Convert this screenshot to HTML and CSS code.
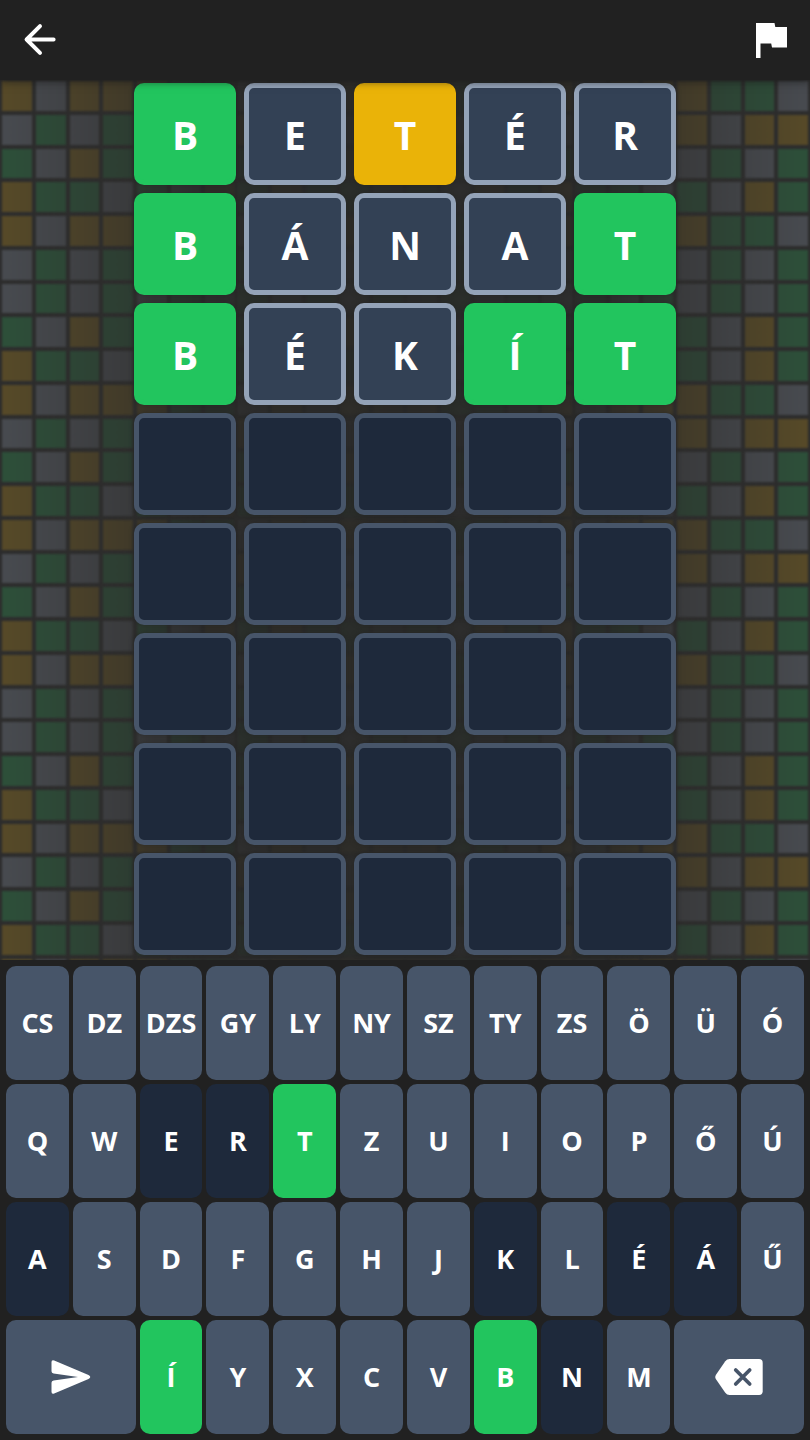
FILE: index.html
```html
<!DOCTYPE html>
<html lang="hu">
<head>
<meta charset="utf-8">
<meta name="viewport" content="width=device-width, initial-scale=1">
<title>Szójáték</title>
<link rel="stylesheet" href="styles.css">
</head>
<body>
<div class="app">
  <header class="topbar">
    <button class="icon-button" type="button" aria-label="Vissza">
      <svg width="36" height="36" viewBox="0 0 36 36" fill="none" stroke="#fff" stroke-width="4" stroke-linecap="round" stroke-linejoin="round"><path d="M31.600 17.5H4.600M18 4.200 4.600 17.5 18 30.800"/></svg>
    </button>
    <button class="icon-button" type="button" aria-label="Feladás">
      <svg width="36" height="36" viewBox="0 0 36 36" fill="#fff"><path d="M4 1h18.500l.8 4H35v20.500H20l-.8-4H8.500v14.500H4z"/></svg>
    </button>
  </header>

  <main class="play">
    <div class="mosaic" id="mosaic" aria-hidden="true"></div>
    <div class="board" id="board"></div>
  </main>

  <section class="keyboard" id="keyboard" aria-label="Billentyűzet">
    <button class="key wide send" type="button" aria-label="Küldés">
      <svg width="40" height="36" viewBox="0 0 40 36" fill="#fff"><path d="M.5 3.100Q.5.500 3.200 1.500L37.500 16.100Q41 18 37.500 19.900L3.200 34.400Q.5 35.400.5 32.800V23.700Q.5 21.700 2.600 21.400L27 18 2.600 14.500Q.5 14.200.5 12.200Z"/></svg>
    </button>
    <button class="key wide erase" type="button" aria-label="Törlés">
      <svg width="48" height="36" viewBox="0 0 48 36"><path fill="#fff" d="M14.500 0H44Q47.700 0 47.700 3.700V32.300Q47.700 36 44 36H14.500Q12 36 10.300 33.800L1 20.300Q-.5 18 1 15.700L10.300 2.200Q12 0 14.500 0Z"/><path d="M20.700 11l14 14M34.700 11l-14 14" fill="none" stroke="#475569" stroke-width="3.700" stroke-linecap="round"/></svg>
    </button>
  </section>
</div>
<script src="app.js"></script>
</body>
</html>
```
FILE: styles.css
```css
* {
  box-sizing: border-box;
}

body {
  margin: 0;
  background: #212121;
  color: #fff;
  font-family: "Open Sans", "Noto Sans", sans-serif;
}

.app {
  display: flex;
  flex-direction: column;
  min-height: 100vh;
}

button {
  margin: 0;
  padding: 0;
  border: 0;
  background: none;
  color: inherit;
  font: inherit;
}

svg {
  display: block;
}

.topbar {
  display: flex;
  align-items: center;
  justify-content: space-between;
  position: relative;
  z-index: 1;
  height: 80px;
  padding: 0 22px;
  background: #212121;
  box-shadow: 0 2px 8px rgba(24, 24, 24, 0.6);
}

.play {
  position: relative;
  flex: 1;
  padding: 3px 8px 5px;
  overflow: hidden;
  background: #2d2d2d;
}

/* Decorative squares behind the board, fading toward the centre */
.mosaic {
  position: absolute;
  inset: 0 0 auto;
  display: grid;
  grid-template-columns: repeat(24, 1fr);
  filter: blur(1px);
}

.mosaic::after {
  content: "";
  position: absolute;
  inset: 0;
  background: linear-gradient(90deg, rgba(45, 45, 45, 0), rgba(45, 44, 43, 0.5) 15%, rgba(42, 42, 41, 0.85) 25%, rgba(42, 42, 41, 0.92) 50%, rgba(42, 42, 41, 0.85) 75%, rgba(45, 44, 43, 0.5) 85%, rgba(45, 45, 45, 0));
}

.square {
  aspect-ratio: 1;
  padding: 1px 2px 3px;
  background-clip: content-box;
}

.square.y { background-color: #574a28; }
.square.g { background-color: #2d503a; }
.square.s { background-color: #484b50; }

.board {
  position: relative;
  display: grid;
  grid-template-columns: repeat(5, 1fr);
  gap: 8px;
  max-width: 542px;
  margin: 0 auto;
}

.tile {
  display: flex;
  align-items: center;
  justify-content: center;
  aspect-ratio: 1;
  padding-top: 2px;
  border: 5px solid #475569;
  border-radius: 10px;
  background: #1e293b;
  box-shadow: 0 0 5px rgba(30, 30, 30, 0.6);
  font-size: 39px;
  line-height: 48px;
  font-weight: 700;
}

.tile.absent {
  border-color: #94a3b8;
  background: #334155;
}

.tile.hit {
  border-color: #22c55e;
  background: #22c55e;
}

.tile.near {
  border-color: #eab308;
  background: #eab308;
}

.keyboard {
  display: grid;
  grid-template-columns: repeat(12, 1fr);
  grid-auto-rows: 114px;
  gap: 4px;
  padding: 6px;
  background: #212121;
}

.key {
  display: flex;
  align-items: center;
  justify-content: center;
  min-width: 0;
  padding-bottom: 1px;
  border-radius: 10px;
  background: #475569;
  font-size: 27px;
  line-height: 36px;
  font-weight: 700;
}

.key.wide {
  grid-column: span 2;
  padding-bottom: 0;
}

.key.hit { background: #22c55e; }
.key.absent { background: #1e293b; }
```
FILE: app.js
```js
const A = "ysyy", B = "sgsg", C = "gsyg", D = "yggs";
const left = [A, B, C, D, A, B, B, C, D, A, B, C, D, A, B, C, D, A, B, B, C, D, A, B, C, D, A];
const right = [D, A, B, C, D, B, B, C, C, D, A, B, C, D, A, B, C, D, B, B, C, C, D, A, B, C, D];

const mosaic = document.getElementById("mosaic");
left.forEach((start, i) => {
  const middle = (right[i] + start).repeat(2);
  for (const color of start + middle + right[i]) {
    const square = document.createElement("span");
    square.className = "square " + color;
    mosaic.append(square);
  }
});

const guesses = [["BETÉR", "hanaa"], ["BÁNAT", "haaah"], ["BÉKÍT", "haahh"]];
const states = { h: "hit", n: "near", a: "absent" };
const board = document.getElementById("board");
for (let row = 0; row < 8; row++) {
  for (let col = 0; col < 5; col++) {
    const tile = document.createElement("div");
    tile.className = "tile";
    if (guesses[row]) {
      tile.textContent = guesses[row][0][col];
      tile.classList.add(states[guesses[row][1][col]]);
    }
    board.append(tile);
  }
}

const keyboard = document.getElementById("keyboard");
const send = keyboard.querySelector(".send");
const erase = keyboard.querySelector(".erase");
const hits = ["T", "Í", "B"];
const misses = ["E", "R", "A", "K", "É", "Á", "N"];

function addKeys(letters, before) {
  for (const letter of letters.split(" ")) {
    const key = document.createElement("button");
    key.type = "button";
    key.className = "key";
    key.textContent = letter;
    if (hits.includes(letter)) key.classList.add("hit");
    if (misses.includes(letter)) key.classList.add("absent");
    keyboard.insertBefore(key, before);
  }
}

addKeys("CS DZ DZS GY LY NY SZ TY ZS Ö Ü Ó", send);
addKeys("Q W E R T Z U I O P Ő Ú", send);
addKeys("A S D F G H J K L É Á Ű", send);
addKeys("Í Y X C V B N M", erase);
```
